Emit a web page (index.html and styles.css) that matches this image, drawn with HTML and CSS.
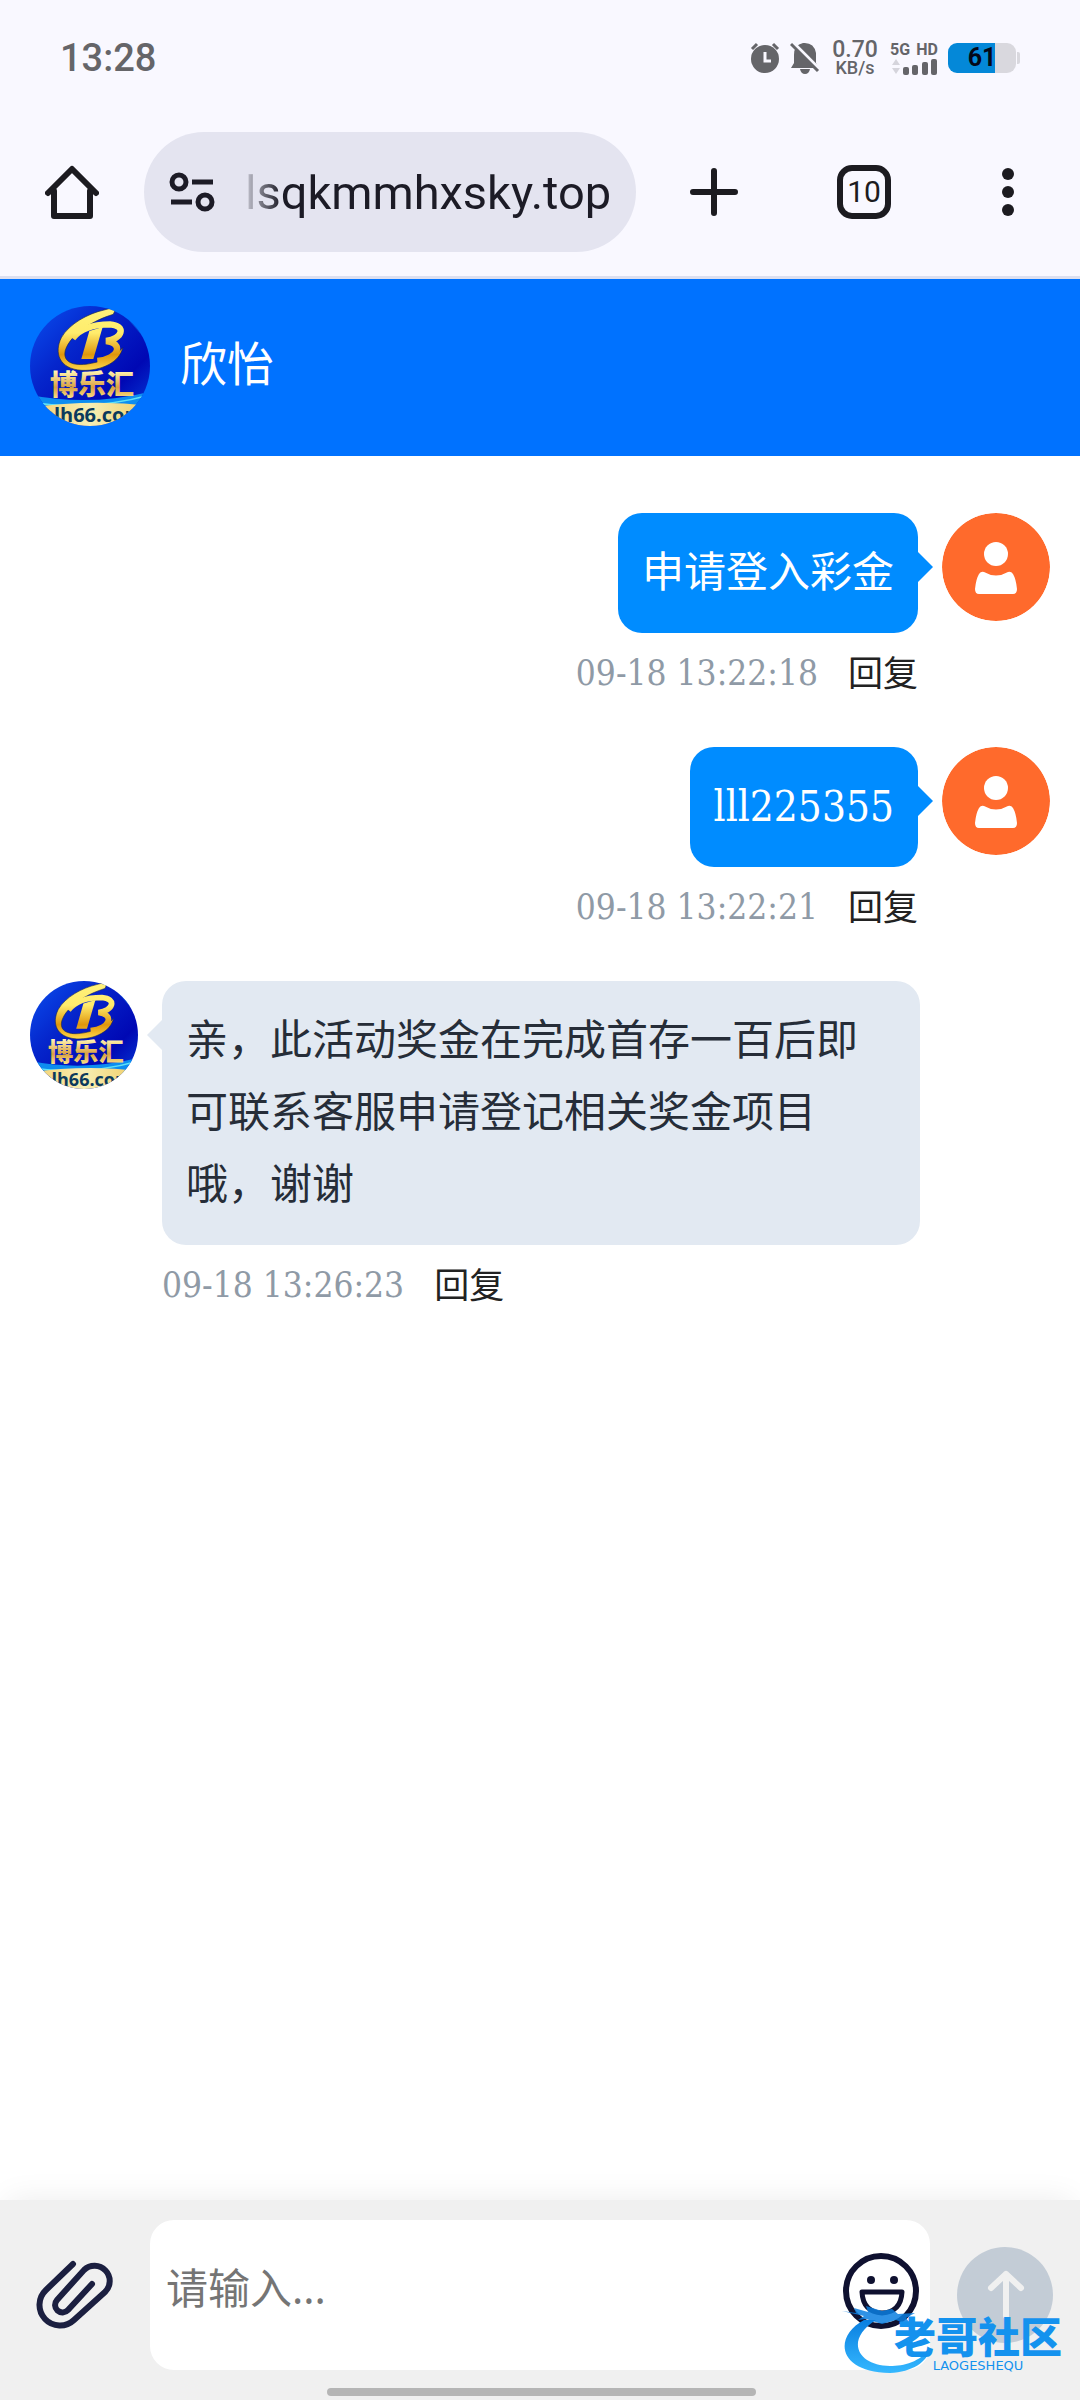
FILE: index.html
```html
<!DOCTYPE html>
<html lang="zh-CN">
<head>
    <meta charset="UTF-8">
    <meta name="viewport" content="width=device-width, initial-scale=1.0">
    <title>欣怡</title>
    <link rel="stylesheet" href="styles.css">
</head>
<body>
    <!-- 公用图形 -->
    <svg class="defs" width="0" height="0" aria-hidden="true">
        <defs>
            <linearGradient id="sky" x1="0" y1="0" x2="1" y2="1">
                <stop offset="0" stop-color="#0a50f0"/>
                <stop offset="0.35" stop-color="#0526cc"/>
                <stop offset="0.7" stop-color="#0008b4"/>
                <stop offset="1" stop-color="#0648e0"/>
            </linearGradient>
            <linearGradient id="gold" gradientUnits="userSpaceOnUse" x1="0" y1="40" x2="0" y2="225">
                <stop offset="0" stop-color="#fff27a"/>
                <stop offset="0.4" stop-color="#ffec6c"/>
                <stop offset="0.75" stop-color="#e0960c"/>
                <stop offset="1" stop-color="#ffd84a"/>
            </linearGradient>
            <linearGradient id="goldText" x1="0" y1="0" x2="0" y2="1">
                <stop offset="0.2" stop-color="#fff3b0"/>
                <stop offset="0.6" stop-color="#d9a040"/>
                <stop offset="0.9" stop-color="#ffe68c"/>
            </linearGradient>
            <linearGradient id="sand" x1="0" y1="0" x2="1" y2="0">
                <stop offset="0" stop-color="#f4cf6a"/>
                <stop offset="0.5" stop-color="#f7eeb4"/>
                <stop offset="1" stop-color="#f1cc62"/>
            </linearGradient>
            <symbol id="brand" viewBox="30 33 360 360">
                <rect x="30" y="33" width="360" height="360" fill="url(#sky)"/>
                <path d="M290 33 L390 150 V33Z" fill="#0a6ee0" opacity="0.6"/>
                <path d="M30 300 Q210 335 390 290 V340 H30Z" fill="#0d8df0"/>
                <path d="M30 322 Q210 350 390 300" fill="none" stroke="#5fe0f5" stroke-width="5"/>
                <path d="M30 338 Q210 312 390 332 V393 H30Z" fill="url(#sand)"/>
                <path d="M252 45 L278 38 L286 44 L280 58 C220 76 152 116 136 166 C126 208 172 214 214 205 C258 196 290 180 308 158 C300 200 246 228 186 226 C116 222 102 172 124 128 C148 86 204 56 252 45Z" fill="url(#gold)" stroke="#1c2a50" stroke-width="2"/>
                <path d="M158 130 C184 96 232 88 270 88 C320 92 308 132 258 138 C312 144 298 192 232 198" fill="none" stroke="url(#gold)" stroke-width="19"/>
                <path d="M208 108 L248 96 L220 192 L184 192Z" fill="url(#gold)"/>
                <text class="brand-name" x="216" y="301" text-anchor="middle" fill="url(#goldText)">博乐汇</text>
                <text class="brand-site" x="218" y="382" text-anchor="middle">blh66.com</text>
            </symbol>
            <symbol id="user" viewBox="0 0 108 108">
                <circle cx="54" cy="54" r="54" fill="#ff6a2c"/>
                <circle cx="54" cy="41" r="12" fill="#fff"/>
                <path d="M42 59 Q54 66 66 59 Q69 58 71 61 Q74 66 75 76 Q75 81 71 81 H37 Q33 81 33 76 Q34 66 37 61 Q39 58 42 59Z" fill="#fff"/>
            </symbol>
        </defs>
    </svg>

    <div class="browser">
        <div class="status-bar">
            <span class="clock">13:28</span>
            <div class="status-icons">
                <svg width="30" height="32" viewBox="0 0 30 32">
                    <circle cx="15" cy="17" r="14" fill="#656569"/>
                    <path d="M2 7 L7 2 M28 7 L23 2" stroke="#656569" stroke-width="3"/>
                    <path d="M15 10 V19 H21" fill="none" stroke="#f9f8ff" stroke-width="3"/>
                </svg>
                <svg width="30" height="32" viewBox="0 0 30 32">
                    <path d="M1 26 L4 21 V13 Q4 3 13 1 Q24 0 26 11 V21 L29 26Z" fill="#656569"/>
                    <path d="M10 27 H20 Q19 32 15 32 Q11 32 10 27Z" fill="#656569"/>
                    <path d="M3 1 L30 28" stroke="#f9f8ff" stroke-width="4"/>
                    <path d="M1 2 L28 29" stroke="#656569" stroke-width="3"/>
                </svg>
                <div class="speed">
                    <span class="speed-num">0.70</span>
                    <span class="speed-unit">KB/s</span>
                </div>
                <div class="network">
                    <div class="network-type"><span>5G</span><span>HD</span></div>
                    <svg width="48" height="17" viewBox="0 0 48 17">
                        <path d="M2 7 L6 1 L10 7Z M2 10 L6 16 L10 10Z" fill="#d5d4dc"/>
                        <rect x="13" y="9" width="6" height="8" rx="2" fill="#656569"/>
                        <rect x="22" y="7" width="6" height="10" rx="2" fill="#656569"/>
                        <rect x="32" y="4" width="6" height="13" rx="2" fill="#656569"/>
                        <rect x="41" y="1" width="6" height="16" rx="2" fill="#656569"/>
                    </svg>
                </div>
                <div class="battery"><span>61</span></div>
            </div>
        </div>

        <div class="toolbar">
            <button class="tool" type="button" aria-label="主页">
                <svg width="54" height="54" viewBox="0 0 54 54" fill="none" stroke="#1c1b20" stroke-width="6" stroke-linejoin="round" stroke-linecap="round">
                    <path d="M9 26 V51 H45 V26"/>
                    <path d="M3 28 L27 4 L51 28"/>
                </svg>
            </button>
            <div class="address">
                <svg width="46" height="40" viewBox="0 0 46 40" fill="none" stroke="#1c1b26" stroke-width="5">
                    <circle cx="10" cy="10" r="7"/>
                    <path d="M23 10 H44 M2 30 H23"/>
                    <circle cx="36" cy="30" r="7"/>
                </svg>
                <input class="address-input" type="text" value="lsqkmmhxsky.top" aria-label="网址">
            </div>
            <div class="tools">
                <button class="tool" type="button" aria-label="新建标签页">
                    <svg width="54" height="54" viewBox="0 0 54 54" stroke="#1c1b20" stroke-width="6" stroke-linecap="round">
                        <path d="M27 6 V48 M6 27 H48"/>
                    </svg>
                </button>
                <button class="tool tabs" type="button" aria-label="标签页">10</button>
                <button class="tool" type="button" aria-label="更多">
                    <svg width="42" height="54" viewBox="0 0 42 54" fill="#1c1b20">
                        <circle cx="21" cy="9" r="6"/>
                        <circle cx="21" cy="27" r="6"/>
                        <circle cx="21" cy="45" r="6"/>
                    </svg>
                </button>
            </div>
        </div>
    </div>

    <header class="chat-header">
        <svg class="avatar avatar-large"><use href="#brand"/></svg>
        <h1>欣怡</h1>
    </header>

    <main class="chat">
        <div class="message mine">
            <svg class="avatar"><use href="#user"/></svg>
            <div class="content">
                <div class="bubble">申请登入彩金</div>
                <div class="meta">
                    <time>09-18 13:22:18</time>
                    <button type="button" class="reply">回复</button>
                </div>
            </div>
        </div>

        <div class="message mine">
            <svg class="avatar"><use href="#user"/></svg>
            <div class="content">
                <div class="bubble">lll225355</div>
                <div class="meta">
                    <time>09-18 13:22:21</time>
                    <button type="button" class="reply">回复</button>
                </div>
            </div>
        </div>

        <div class="message">
            <svg class="avatar"><use href="#brand"/></svg>
            <div class="content">
                <div class="bubble">亲，此活动奖金在完成首存一百后即可联系客服申请登记相关奖金项目哦，谢谢</div>
                <div class="meta">
                    <time>09-18 13:26:23</time>
                    <button type="button" class="reply">回复</button>
                </div>
            </div>
        </div>
    </main>

    <footer class="footer">
        <div class="composer">
            <button class="attach" type="button" aria-label="附件">
                <svg width="90" height="90" viewBox="0 0 90 90" fill="none" stroke="#1b1f40" stroke-width="6" stroke-linecap="round">
                    <path d="M43 14 L16 40 A20 20 0 0 0 44 70 L75 42 A15 15 0 0 0 54 20 L27 50 A7 7 0 0 0 38 60 L62 34"/>
                </svg>
            </button>
            <div class="field">
                <textarea placeholder="请输入..." aria-label="请输入"></textarea>
                <button class="emoji" type="button" aria-label="表情">
                    <svg width="76" height="76" viewBox="0 0 76 76" fill="none" stroke="#0f1130" stroke-width="6">
                        <circle cx="38" cy="38" r="35"/>
                        <path d="M19 39 H59 Q58 59 39 60 Q20 59 19 39Z" stroke-width="5" stroke-linejoin="round"/>
                        <circle cx="28" cy="27" r="4" fill="#0f1130" stroke="none"/>
                        <circle cx="51" cy="27" r="4" fill="#0f1130" stroke="none"/>
                    </svg>
                </button>
            </div>
            <button class="send" type="button" aria-label="发送">
                <svg width="96" height="96" viewBox="0 0 96 96" fill="none" stroke="#f0f0f0" stroke-width="6" stroke-linecap="round" stroke-linejoin="round">
                    <path d="M49 69 V27 M34 41 L49 27 L64 41"/>
                </svg>
            </button>
        </div>
        <div class="home-handle"></div>

        <div class="watermark">
            <svg width="92" height="68" viewBox="0 0 92 68">
                <defs>
                    <linearGradient id="wave" x1="0" y1="0" x2="0" y2="1">
                        <stop offset="0" stop-color="#0a7fe0"/>
                        <stop offset="1" stop-color="#35b8ff"/>
                    </linearGradient>
                </defs>
                <path d="M22 14 C-8 30 -6 66 48 67 C70 66 86 56 88 42 C78 56 62 60 48 60 C16 60 2 34 34 14Z" fill="url(#wave)"/>
                <path d="M0 5 L14 7 L12 2 L26 6 L24 0 L40 5 L50 3 L56 8 L73 7 L64 12 L70 20 L54 14 L40 18 L24 13 L16 14 L22 10Z" fill="#0a7fe0" opacity="0.85"/>
            </svg>
            <div class="watermark-text">
                <span class="watermark-name">老哥社区</span>
                <span class="watermark-latin">LAOGESHEQU</span>
            </div>
        </div>
    </footer>
</body>
</html>
```
FILE: styles.css
```css
* {
    box-sizing: border-box;
}

body {
    margin: 0;
    min-height: 100vh;
    display: flex;
    flex-direction: column;
    background: #fff;
    font-family: "Noto Sans", "Noto Sans CJK SC", sans-serif;
    color: #262d38;
}

button {
    padding: 0;
    border: none;
    background: none;
    color: inherit;
    font: inherit;
    cursor: pointer;
}

svg {
    display: block;
    flex: none;
}

.defs {
    position: absolute;
}

/* 浏览器顶部 */
.browser {
    background: #f9f8ff;
    border-bottom: 3px solid #dcdff0;
    font-family: Roboto, sans-serif;
}

.status-bar {
    display: flex;
    justify-content: space-between;
    align-items: center;
    height: 108px;
    padding: 8px 60px 0;
    color: #656569;
}

.clock {
    font-size: 38px;
    font-weight: 500;
}

.status-icons {
    display: flex;
    align-items: center;
    gap: 10px;
}

.speed {
    display: flex;
    flex-direction: column;
    align-items: center;
    width: 50px;
    font-weight: 500;
}

.speed-num {
    font-size: 23px;
    line-height: 20px;
}

.speed-unit {
    font-size: 18px;
    line-height: 16px;
}

.network-type {
    display: flex;
    justify-content: space-between;
    font-size: 16px;
    font-weight: 700;
    line-height: 16px;
}

.battery {
    position: relative;
    width: 68px;
    height: 30px;
    margin-right: 4px;
    border-radius: 9px;
    background: linear-gradient(to right, #0488d8 47px, #d9d8de 47px);
    color: #040818;
    font-size: 25px;
    font-weight: 700;
    line-height: 30px;
    text-align: center;
}

.battery::after {
    content: "";
    position: absolute;
    top: 9px;
    right: -4px;
    width: 3px;
    height: 12px;
    border-radius: 0 2px 2px 0;
    background: #d9d8de;
}

.toolbar {
    display: flex;
    align-items: center;
    height: 168px;
    padding: 0 51px 0 45px;
}

.address {
    flex: 1;
    min-width: 0;
    display: flex;
    align-items: center;
    gap: 30px;
    height: 120px;
    margin: 0 51px 0 45px;
    padding: 0 20px 0 25px;
    border-radius: 60px;
    background: #e4e4f0;
}

.address-input {
    flex: 1;
    min-width: 0;
    padding: 0;
    border: none;
    outline: none;
    background: none;
    color: #1c1b26;
    font-family: Roboto, sans-serif;
    font-size: 47px;
    -webkit-mask-image: linear-gradient(to right, rgba(0, 0, 0, 0.15), #000 36px);
    mask-image: linear-gradient(to right, rgba(0, 0, 0, 0.15), #000 36px);
}

.tools {
    display: flex;
    gap: 96px;
}

.tabs {
    width: 54px;
    height: 54px;
    border: 6px solid #1c1b20;
    border-radius: 15px;
    color: #1c1b20;
    font-size: 30px;
    line-height: 42px;
}

/* 聊天标题 */
.chat-header {
    display: flex;
    align-items: center;
    gap: 30px;
    padding: 27px 30px 30px;
    background: #0072ff;
    color: #fff;
}

.chat-header h1 {
    margin: 0;
    padding-bottom: 6px;
    font-size: 47px;
    font-weight: normal;
    line-height: 60px;
}

.avatar {
    width: 108px;
    height: 108px;
    border-radius: 50%;
}

.avatar-large {
    width: 120px;
    height: 120px;
}

.brand-name {
    font-family: "Noto Sans CJK SC", sans-serif;
    font-size: 84px;
    font-weight: 900;
}

.brand-site {
    font-family: "Open Sans", sans-serif;
    font-size: 60px;
    font-weight: 700;
    fill: #0c3a5c;
}

/* 消息列表 */
.chat {
    flex: 1;
    display: flex;
    flex-direction: column;
    gap: 44px;
    padding: 57px 30px;
}

.message {
    display: flex;
    align-items: flex-start;
    gap: 24px;
    padding-right: 130px;
}

.mine {
    flex-direction: row-reverse;
    padding-right: 0;
    padding-left: 130px;
}

.content {
    display: flex;
    flex-direction: column;
    align-items: flex-start;
}

.mine .content {
    align-items: flex-end;
}

.bubble {
    position: relative;
    padding: 24px;
    border-radius: 24px;
    background: #e2e9f2;
    font-family: "DejaVu Serif Condensed", "Noto Sans CJK SC", serif;
    font-size: 42px;
    line-height: 72px;
}

.bubble::before {
    content: "";
    position: absolute;
    top: 39px;
    right: 100%;
    border: 15px solid transparent;
    border-left-width: 0;
    border-right-color: #e2e9f2;
}

.mine .bubble {
    background: #008cff;
    color: #fff;
}

.mine .bubble::before {
    right: auto;
    left: 100%;
    border-width: 15px 0 15px 15px;
    border-left-color: #008cff;
}

.meta {
    display: flex;
    gap: 30px;
    margin-top: 10px;
    font-size: 35px;
    line-height: 60px;
}

.meta time {
    color: #8f9aa6;
    font-family: "DejaVu Serif Condensed", serif;
}

.reply {
    color: #222;
}

/* 输入区 */
.footer {
    position: relative;
    padding: 20px 27px 4px 30px;
    background: #f0f0f0;
    box-shadow: 0 -8px 30px -8px rgba(0, 0, 0, 0.08);
}

.composer {
    display: flex;
    align-items: center;
}

.field {
    flex: 1;
    display: flex;
    align-items: center;
    height: 150px;
    margin: 0 27px 0 30px;
    padding-right: 11px;
    border-radius: 24px;
    background: #fff;
}

.field textarea {
    flex: 1;
    min-width: 0;
    height: 150px;
    padding: 32px 16px;
    border: none;
    outline: none;
    resize: none;
    background: none;
    font-family: "Noto Sans", "Noto Sans CJK SC", sans-serif;
    font-size: 42px;
    line-height: 72px;
}

.field textarea::placeholder {
    color: #757575;
}

.emoji {
    padding-bottom: 8px;
}

.send {
    border-radius: 50%;
    background: #c3ccd6;
}

.home-handle {
    width: 42%;
    height: 8px;
    margin: 18px auto 0;
    border-radius: 4px;
    background: #b5b5b5;
}

.watermark {
    position: absolute;
    right: 18px;
    bottom: 26px;
    display: flex;
    align-items: flex-end;
    pointer-events: none;
}

.watermark-text {
    display: flex;
    flex-direction: column;
    align-items: center;
    margin-left: -40px;
    color: #1492ee;
}

.watermark-name {
    font-family: "Noto Sans CJK SC", sans-serif;
    font-size: 42px;
    font-weight: 900;
    line-height: 46px;
}

.watermark-latin {
    font-family: "DejaVu Sans", sans-serif;
    font-size: 13px;
    line-height: 16px;
}
```
